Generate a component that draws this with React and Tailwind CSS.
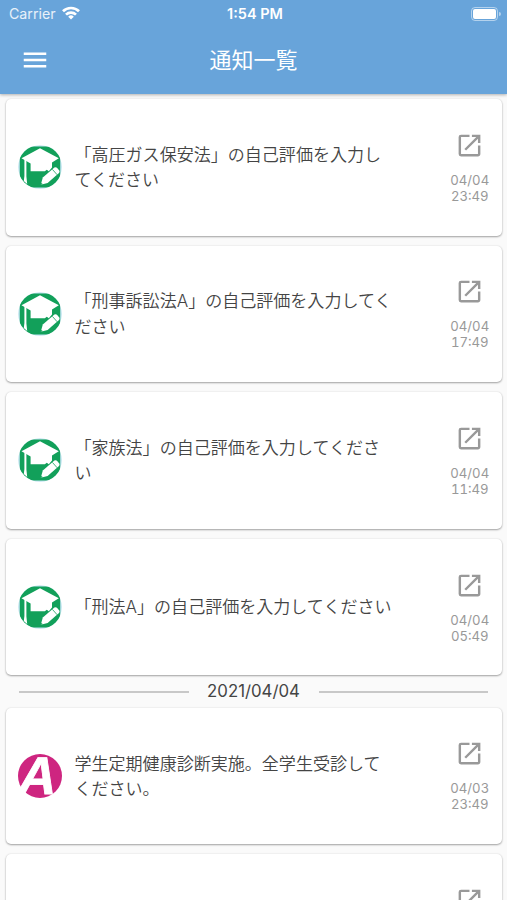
import { MdMenu, MdOpenInNew } from 'react-icons/md'

const today = [
    { lines: ['「高圧ガス保安法」の自己評価を入力し', 'てください'], date: '04/04', time: '23:49' },
    { lines: ['「刑事訴訟法A」の自己評価を入力してく', 'ださい'], date: '04/04', time: '17:49' },
    { lines: ['「家族法」の自己評価を入力してくださ', 'い'], date: '04/04', time: '11:49' },
    { lines: ['「刑法A」の自己評価を入力してください'], date: '04/04', time: '05:49' },
]

const earlier = [
    { lines: ['学生定期健康診断実施。全学生受診して', 'ください。'], date: '04/03', time: '23:49', type: 'campus' },
    { lines: [], date: '', time: '' },
]

function StudyIcon() {
    return (
        <svg viewBox="0 0 44 44" className="h-11 w-11 shrink-0">
            <defs>
                <clipPath id="study-clip">
                    <circle cx="22" cy="22" r="22" />
                </clipPath>
            </defs>
            <circle cx="22" cy="22" r="21.8" fill="#bfe3f0" />
            <rect x="1.8" y="1.4" width="40.4" height="41" rx="13" fill="#12a05a" clipPath="url(#study-clip)" />
            {/* Cap */}
            <path d="M22 3.3 40.8 13.2 34 17.4V22.5L30.8 26.2 28.8 24.8 26.8 26.2H12.6V18.4L3.5 13.2Z" fill="#fff" />
            <path d="M6.4 14.2h2V31.5l.8 7.5-3.4-3 .6-5Z" fill="#fff" />
            {/* Pencil */}
            <path d="m22.8 39.8 2-7.2L36.4 22.6q1.6-.8 2.8.4l2 2.4q1 1.4-.2 2.6L29.6 38Z" fill="#fff" />
            <path d="m34.4 24.4 4.8 5.4" stroke="#12a05a" strokeWidth="0.8" />
            <path d="m22.8 39.8.6-2 1.5 1.4Z" fill="#12a05a" />
        </svg>
    )
}

function CampusIcon() {
    return (
        <svg viewBox="0 0 44 44" className="h-11 w-11 shrink-0 overflow-visible">
            <circle cx="22" cy="22" r="22" fill="#ce2580" />
            <text
                x="16.8"
                y="40"
                textAnchor="middle"
                transform="translate(8.4 0) skewX(-12)"
                className="fill-white stroke-white font-['Liberation_Sans',sans-serif] text-[53px] font-bold"
                strokeWidth="0.8"
            >
                A
            </text>
        </svg>
    )
}

function WifiIcon() {
    return (
        <svg viewBox="0 0 18 14" className="ml-1.5 h-3.5 w-[18px]" fill="none" stroke="#fff" strokeWidth="2.7">
            <path d="M1 5.3a11.3 11.3 0 0 1 16 0" />
            <path d="M4 8.6a7.1 7.1 0 0 1 10 0" />
            <path d="M9 13.5 6.2 10.7a4 4 0 0 1 5.6 0Z" fill="#fff" stroke="none" />
        </svg>
    )
}

function NotificationCard({ item }) {
    return (
        <div className="mx-[5.5px] mb-[10px] flex h-[136.6px] shrink-0 items-center rounded-[5px] bg-white pl-[12.5px] shadow-[0_1px_2px_rgba(0,0,0,0.34),0_0_2px_rgba(0,0,0,0.1)]">
            {item.type === 'campus' ? <CampusIcon /> : <StudyIcon />}
            <div className="ml-[12.5px] flex-1 text-[17.04px] leading-[25.4px] font-[350] whitespace-nowrap text-[#444]">
                {item.lines.map((line) => (
                    <p key={line}>{line}</p>
                ))}
            </div>
            <div className="flex w-[63.5px] flex-col items-center text-[#999]">
                <MdOpenInNew className="h-[29px] w-[29px]" />
                <div className="mt-[12px] min-h-8 text-center font-[Inter,'Liberation_Sans',sans-serif] text-[13.2px] leading-4 tabular-nums">
                    <p>{item.date}</p>
                    <p>{item.time}</p>
                </div>
            </div>
        </div>
    )
}

export default function App() {
    return (
        <div className="flex h-[900px] w-[507px] flex-col overflow-hidden bg-[#fafafa] font-[Inter,'Noto_Sans_CJK_JP',sans-serif]">
            <header className="z-10 h-[94px] shrink-0 bg-[#68a4da] text-white shadow-[0_1px_3px_rgba(0,0,0,0.3)]">
                {/* Status bar */}
                <div className="grid h-[27px] grid-cols-3 items-center pr-[6px] pl-[9px]">
                    <div className="flex items-center text-[14.2px] text-white/85">
                        Carrier
                        <WifiIcon />
                    </div>
                    <div className="text-center text-[14.5px] font-semibold">1:54 PM</div>
                    <div className="flex items-center justify-end">
                        <div className="h-[14px] w-[27px] rounded-[4px] border border-white/50 p-px">
                            <div className="h-full w-[23px] rounded-[2px] bg-white" />
                        </div>
                        <div className="ml-px h-1 w-[2px] rounded-r-full bg-white/50" />
                    </div>
                </div>
                {/* Title bar */}
                <div className="grid h-[65px] grid-cols-3 items-center px-5">
                    <MdMenu className="h-[30px] w-[30px]" />
                    <h1 className="text-center text-[22px] leading-none">通知一覧</h1>
                </div>
            </header>

            <main className="flex flex-col pt-[5px]">
                {today.map((item) => (
                    <NotificationCard key={item.time} item={item} />
                ))}

                {/* Date separator */}
                <div className="-mt-[10px] flex h-[32.3px] shrink-0 items-center px-[19px]">
                    <div className="h-[2px] flex-1 bg-[#c8c8c8]" />
                    <span className="w-[130px] text-center text-[16.8px] text-[#444]">2021/04/04</span>
                    <div className="h-[2px] flex-1 bg-[#c8c8c8]" />
                </div>

                {earlier.map((item) => (
                    <NotificationCard key={item.time} item={item} />
                ))}
            </main>
        </div>
    )
}
